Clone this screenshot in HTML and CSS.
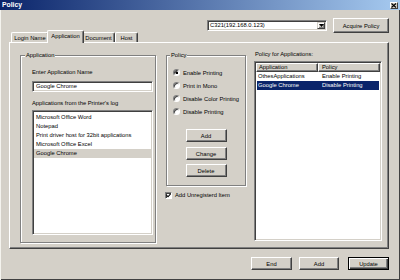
FILE: index.html
```html
<!DOCTYPE html>
<html>
<head>
<meta charset="utf-8">
<title>Policy</title>
<link rel="stylesheet" href="styles.css">
</head>
<body>
<div class="window">
  <div class="titlebar">
    <span class="title">Policy</span>
    <span class="close"><svg width="6" height="5" viewBox="0 0 6 5"><path d="M0.5 0.5 L5 4.5 M5 0.5 L0.5 4.5" stroke="#000" stroke-width="1.1"/></svg></span>
  </div>
  <div class="toprow">
    <div class="combo">
      <span class="combo-text">C321(192.168.0.123)</span>
      <span class="combo-arrow"><svg width="5" height="3" viewBox="0 0 5 3"><polygon points="0,0 5,0 2.5,3" fill="#000"/></svg></span>
    </div>
    <div class="btn acquire">Acquire Policy</div>
  </div>
  <div class="tabs">
    <div class="tab tab-login">Login Name</div>
    <div class="tab tab-app active">Application</div>
    <div class="tab tab-doc">Document</div>
    <div class="tab tab-host">Host</div>
  </div>
  <div class="panel">
    <div class="group app-group">
      <div class="group-label">Application</div>
      <div class="field-label first">Enter Application Name</div>
      <div class="textbox">Google Chrome</div>
      <div class="field-label">Applications from the Printer's log</div>
      <div class="listbox">
        <div class="item">Microsoft Office Word</div>
        <div class="item">Notepad</div>
        <div class="item">Print driver host for 32bit applications</div>
        <div class="item">Microsoft Office Excel</div>
        <div class="item selected">Google Chrome</div>
      </div>
    </div>
    <div class="policy-col">
      <div class="group policy-group">
        <div class="group-label policy-label">Policy</div>
        <div class="radios">
          <div class="radio-row"><span class="radio checked"></span><span>Enable Printing</span></div>
          <div class="radio-row"><span class="radio"></span><span>Print in Mono</span></div>
          <div class="radio-row"><span class="radio"></span><span>Disable Color Printing</span></div>
          <div class="radio-row"><span class="radio"></span><span>Disable Printing</span></div>
        </div>
        <div class="btn side-btn btn-add">Add</div>
        <div class="btn side-btn btn-change">Change</div>
        <div class="btn side-btn btn-delete">Delete</div>
      </div>
      <div class="check-row">
        <span class="checkbox"><svg width="5" height="5" viewBox="0 0 5 5"><path d="M0.5 2.2 L2 3.8 L4.6 0.8" stroke="#000" stroke-width="1.1" fill="none"/></svg></span>
        <span>Add Unregisterd Item</span>
      </div>
    </div>
    <div class="right-col">
      <div class="right-label">Policy for Applications:</div>
      <div class="listview">
        <div class="lv-header">
          <div class="hcell c1">Application</div>
          <div class="hcell c2">Policy</div>
        </div>
        <div class="lv-row">
          <div class="cell c1">OthesApplications</div>
          <div class="cell c2">Enable Printing</div>
        </div>
        <div class="lv-row selected">
          <div class="cell c1">Google Chrome</div>
          <div class="cell c2">Disable Printing</div>
        </div>
      </div>
    </div>
  </div>
  <div class="footer">
    <div class="btn foot-btn btn-end">End</div>
    <div class="btn foot-btn btn-fadd">Add</div>
    <div class="btn foot-btn default">Update</div>
  </div>
</div>
</body>
</html>
```
FILE: styles.css
```css
* { box-sizing: border-box; }
html, body { margin: 0; padding: 0; }
body {
  width: 400px;
  height: 280px;
  overflow: hidden;
  background: #d4d0c8;
  font-family: "Liberation Sans", Arial, sans-serif;
  font-size: 5.8px;
  color: #000;
}
.window {
  width: 400px;
  height: 280px;
  display: flex;
  flex-direction: column;
  box-shadow: inset 1px 0 0 #f4f3ee, inset -1px -1px 0 #404040;
}
.titlebar {
  height: 10px;
  flex: none;
  background: linear-gradient(to right, #0a246a, #a6caf0);
  display: flex;
  align-items: center;
  justify-content: space-between;
  padding: 0 2px 0 2px;
}
.title {
  color: #fff;
  font-weight: bold;
  font-size: 6.8px;
  line-height: 10px;
}
.close {
  width: 8px;
  height: 7px;
  background: #d4d0c8;
  border: 1px solid;
  border-color: #fff #404040 #404040 #fff;
  display: flex;
  align-items: center;
  justify-content: center;
}
.toprow {
  flex: none;
  height: 15px;
  margin-top: 8px;
  padding-right: 11px;
  display: flex;
  justify-content: flex-end;
  align-items: center;
}
.combo {
  width: 120px;
  height: 11px;
  margin-right: 6px;
  background: #fff;
  border: 1px solid;
  border-color: #808080 #fff #fff #808080;
  box-shadow: inset 1px 1px 0 #404040, inset -1px -1px 0 #d4d0c8;
  display: flex;
  align-items: stretch;
  padding: 1px;
}
.combo-text {
  flex: 1;
  line-height: 7px;
  padding-left: 1px;
}
.combo-arrow {
  width: 8px;
  background: #d4d0c8;
  border: 1px solid;
  border-color: #d4d0c8 #404040 #404040 #d4d0c8;
  box-shadow: inset 1px 1px 0 #fff, inset -1px -1px 0 #808080;
  display: flex;
  align-items: center;
  justify-content: center;
}
.btn {
  background: #d4d0c8;
  border: 1px solid;
  border-color: #fff #404040 #404040 #fff;
  box-shadow: inset -1px -1px 0 #808080;
  display: flex;
  align-items: center;
  justify-content: center;
  line-height: 8px;
}
.acquire {
  width: 56px;
  height: 15px;
}
.tabs {
  flex: none;
  height: 12px;
  margin-top: -3px;
  padding-left: 11px;
  display: flex;
  align-items: flex-start;
}
.tab {
  height: 10px;
  margin-top: 2px;
  border-top: 1px solid #fff;
  border-left: 1px solid #fff;
  border-right: 1px solid #404040;
  box-shadow: inset -1px 0 0 #808080;
  border-radius: 2px 2px 0 0;
  background: #d4d0c8;
  display: flex;
  align-items: center;
  justify-content: center;
  line-height: 8px;
}
.tab-login { width: 38px; }
.tab-app { width: 37px; }
.tab-doc { width: 33px; }
.tab-host { width: 23px; }
.tab.active {
  height: 13px;
  margin: 0 -2px 0 -2px;
  position: relative;
  z-index: 1;
  align-items: flex-start;
  padding-top: 1px;
}
.panel {
  flex: none;
  margin-left: 9px;
  width: 380px;
  height: 207px;
  border: 1px solid;
  border-color: #fff #404040 #404040 #fff;
  box-shadow: inset -1px -1px 0 #808080;
  padding: 7px 0 0 10px;
  display: flex;
  align-items: flex-start;
}
.group {
  border: 1px solid #808080;
  box-shadow: inset 1px 1px 0 #fff, 1px 1px 0 #fff;
  display: flex;
  flex-direction: column;
}
.group-label {
  align-self: flex-start;
  margin: -5px 0 0 -7px;
  padding: 0 1px;
  line-height: 8px;
  background: #d4d0c8;
}
.app-group {
  width: 136px;
  height: 188px;
  margin-top: 5px;
  padding: 0 2px 7px 11px;
}
.field-label {
  line-height: 8px;
  margin-top: 7px;
}
.field-label.first { margin-top: 9px; }
.textbox {
  height: 11px;
  margin-top: 5px;
  background: #fff;
  border: 1px solid;
  border-color: #808080 #fff #fff #808080;
  box-shadow: inset 1px 1px 0 #404040, inset -1px -1px 0 #d4d0c8;
  padding-left: 3px;
  line-height: 9px;
}
.listbox {
  flex: 1;
  margin-top: 3px;
  background: #fff;
  border: 1px solid;
  border-color: #808080 #fff #fff #808080;
  box-shadow: inset 1px 1px 0 #404040, inset -1px -1px 0 #d4d0c8;
  padding: 2px 1px 0 1px;
}
.item {
  line-height: 9px;
  height: 9px;
  padding-left: 2px;
}
.item.selected { background: #d4d0c8; }
.policy-col {
  width: 80px;
  margin-left: 10px;
  display: flex;
  flex-direction: column;
}
.policy-group {
  height: 131px;
  margin-top: 5px;
  padding: 0 0 0 0;
}
.policy-label { margin-left: 3px; }
.radios { margin-top: 7px; }
.radio-row {
  height: 13px;
  display: flex;
  align-items: center;
  padding-left: 6px;
}
.radio {
  width: 7px;
  height: 7px;
  margin-right: 3px;
  border-radius: 50%;
  background: #fff;
  border: 1px solid;
  border-color: #808080 #fff #fff #808080;
  box-shadow: inset 1px 1px 0 #404040;
}
.radio.checked {
  background: radial-gradient(circle at 55% 55%, #000 1.1px, #fff 1.6px);
}
.side-btn {
  align-self: center;
  width: 41px;
  height: 13px;
}
.btn-add { margin-top: 11px; }
.btn-change { margin-top: 5px; }
.btn-delete { margin-top: 4px; }
.check-row {
  margin-top: 5px;
  height: 8px;
  display: flex;
  align-items: center;
  margin-left: -1px;
}
.checkbox {
  width: 7px;
  height: 7px;
  margin-right: 3px;
  background: #fff;
  border: 1px solid;
  border-color: #808080 #fff #fff #808080;
  box-shadow: inset 1px 1px 0 #404040;
  display: flex;
  align-items: center;
  justify-content: center;
}
.right-col {
  width: 128px;
  margin-left: 8px;
  display: flex;
  flex-direction: column;
}
.right-label {
  line-height: 8px;
  padding-left: 1px;
}
.listview {
  height: 180px;
  margin-top: 3px;
  background: #fff;
  border: 1px solid;
  border-color: #808080 #fff #fff #808080;
  box-shadow: inset 1px 1px 0 #404040, inset -1px -1px 0 #d4d0c8;
  padding: 1px;
}
.lv-header {
  display: flex;
  height: 9px;
}
.hcell {
  background: #d4d0c8;
  border: 1px solid;
  border-color: #fff #404040 #404040 #fff;
  box-shadow: inset -1px -1px 0 #808080;
  line-height: 7px;
  padding-left: 2px;
}
.hcell.c1 { width: 62px; }
.hcell.c2 { flex: 1; padding-left: 3px; }
.lv-row {
  display: flex;
  height: 9px;
  line-height: 9px;
  margin: 0 1px;
}
.cell.c1 { width: 64px; padding-left: 1px; }
.cell.c2 { flex: 1; padding-left: 1px; }
.lv-row.selected {
  background: #0a246a;
  color: #fff;
}
.footer {
  flex: none;
  height: 13px;
  margin-top: 8px;
  padding-right: 11px;
  display: flex;
  justify-content: flex-end;
}
.foot-btn { height: 13px; }
.btn-end { width: 41px; margin-right: 7px; }
.btn-fadd { width: 40px; margin-right: 9px; }
.foot-btn.default {
  width: 41px;
  border: 1px solid #000;
  box-shadow: inset 1px 1px 0 #fff, inset -1px -1px 0 #404040, inset -2px -2px 0 #808080;
}
```
